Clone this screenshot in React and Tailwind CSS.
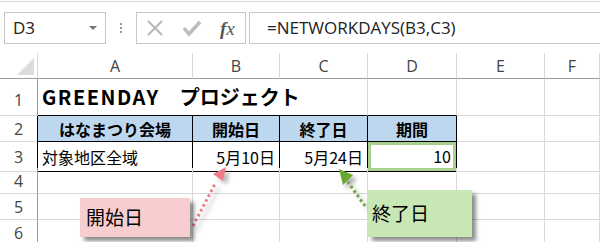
import React from 'react';

const cols = ['A', 'B', 'C', 'D', 'E', 'F'];
const grid = 'grid grid-cols-[38px_155px_87px_88px_89px_88px_1fr]';
const jp = "font-['Noto_Sans_CJK_JP',sans-serif]";

function Cell({ children, className = '' }) {
  return <div className={`border-r border-b border-[#d9d9d9] flex items-center text-[16px] text-black ${jp} ${className}`}>{children}</div>;
}

function RowHead({ n, h = '' }) {
  return (
    <div className={`${h} border-r border-b border-[#d9d9d9] border-r-[#9b9b9b] flex items-center justify-center text-[16px] text-[#444] font-['Open_Sans',sans-serif]`}>
      {n}
    </div>
  );
}

function FormulaBar() {
  return (
    <div className="h-[52px] border-t border-[#d5d5d5] mt-px flex items-start pt-[10px] pl-1">
      <div className="w-[102px] h-[32px] border border-[#c6c6c6] flex items-center justify-between pl-2 pr-2">
        <span className="text-[17px] text-[#222] font-['Open_Sans',sans-serif]">D3</span>
        <span className="w-0 h-0 border-l-[4px] border-r-[4px] border-t-[4px] border-l-transparent border-r-transparent border-t-[#777]" />
      </div>
      <div className="w-[30px] h-[32px] flex flex-col items-center justify-center gap-[2px]">
        <span className="w-[2px] h-[2px] bg-[#999]" />
        <span className="w-[2px] h-[2px] bg-[#999]" />
        <span className="w-[2px] h-[2px] bg-[#999]" />
      </div>
      <div className="w-[110px] h-[32px] border border-[#c6c6c6] flex items-center pl-[9px] gap-[18px]">
        <svg width="18" height="18" viewBox="0 0 18 18"><path d="M2 2L16 16M16 2L2 16" stroke="#b4b4b4" strokeWidth="1.8" /></svg>
        <svg width="20" height="18" viewBox="0 0 20 18"><path d="M2 9L7 15L18 3" stroke="#bcbcbc" strokeWidth="3.5" fill="none" /></svg>
        <span className="text-[19px] italic text-[#555] font-['Liberation_Serif',serif] leading-none"><span className="font-bold">f</span>x</span>
      </div>
      <div className="ml-[3px] flex-1 h-[32px] border border-[#c6c6c6] border-r-0 flex items-center pl-[17px] text-[17px] text-[#222] font-['Open_Sans',sans-serif]">
        =NETWORKDAYS(B3,C3)
      </div>
    </div>
  );
}

export default function App() {
  return (
    <div className="w-[600px] h-[242px] bg-white overflow-hidden relative">
      <FormulaBar />
      <div className={`${grid} h-[26px]`}>
        <div className="border-r border-b border-[#d9d9d9] border-b-[#9b9b9b] relative">
          <span className="absolute right-[3px] bottom-[3px] w-0 h-0" style={{ borderBottom: '17px solid #dcdcdc', borderLeft: '17px solid transparent' }} />
        </div>
        {cols.map((c) => (
          <div key={c} className="border-r border-b border-[#d9d9d9] border-b-[#9b9b9b] flex items-center justify-center text-[16px] text-[#444] font-['Open_Sans',sans-serif]">{c}</div>
        ))}
      </div>
      <div className={`${grid} h-[37px]`}>
        <RowHead n="1" h="pt-[6px]" />
        <Cell className="pl-1 border-b-black col-span-3 font-bold text-[20px] whitespace-nowrap overflow-visible">
          <span className="tracking-[1.5px]">GREENDAY</span>　プロジェクト
        </Cell>
        <Cell className="border-b-black" />
        <Cell />
        <Cell />
      </div>
      <div className={`${grid} h-[26px]`}>
        <RowHead n="2" />
        <Cell className="bg-[#bdd7ee] border-black border-l justify-center font-bold -ml-px">はなまつり会場</Cell>
        <Cell className="bg-[#bdd7ee] border-black justify-center font-bold">開始日</Cell>
        <Cell className="bg-[#bdd7ee] border-black justify-center font-bold">終了日</Cell>
        <Cell className="bg-[#bdd7ee] border-black justify-center font-bold">期間</Cell>
        <Cell />
        <Cell />
      </div>
      <div className={`${grid} h-[26px]`}>
        <RowHead n="3" />
        <Cell className="border-black border-l -ml-px pl-1">対象地区全域</Cell>
        <Cell className="border-black justify-end pr-1">5月10日</Cell>
        <Cell className="border-black justify-end pr-1">5月24日</Cell>
        <Cell className="border-black justify-end p-0">
          <div className="w-full h-full border-[3px] border-[#a9d08e] flex items-center justify-end pr-[2px] -mt-px">10</div>
        </Cell>
        <Cell />
        <Cell />
      </div>
      {['4', '5', '6'].map((n) => (
        <div key={n} className={`${grid} h-[26px]`}>
          <RowHead n={n} />
          <Cell /><Cell /><Cell /><Cell /><Cell /><Cell />
        </div>
      ))}

      <svg className="absolute left-0 top-0" width="600" height="242">
        <defs>
          <filter id="sh" x="-50%" y="-50%" width="200%" height="200%">
            <feGaussianBlur stdDeviation="2" />
          </filter>
        </defs>
        <g opacity="0.45" filter="url(#sh)" transform="translate(4,4)">
          <line x1="193" y1="226" x2="216" y2="182" stroke="#555" strokeWidth="3" strokeDasharray="2.5 3" />
          <polygon points="213,174 225,167 223,180" fill="#555" />
          <line x1="365" y1="206" x2="348" y2="182" stroke="#555" strokeWidth="3" strokeDasharray="2.5 3" />
          <polygon points="339,169 353,175 343,185" fill="#555" />
        </g>
        <line x1="193" y1="226" x2="216" y2="182" stroke="#ee7b85" strokeWidth="3" strokeDasharray="2.5 3" />
        <polygon points="213,174 226,167 223,181" fill="#ee7b85" />
        <line x1="365" y1="206" x2="348" y2="182" stroke="#69a832" strokeWidth="3" strokeDasharray="2.5 3" />
        <polygon points="339,169 353,175 343,185" fill="#69a832" />
      </svg>

      <div className={`absolute left-[80px] top-[198px] w-[110px] h-[39px] bg-[#f8cdd0] shadow-[4px_4px_4px_rgba(0,0,0,0.45)] flex items-center pl-[6px] text-[19px] text-black ${jp}`}>
        開始日
      </div>
      <div className={`absolute left-[368px] top-[190px] w-[104px] h-[47px] bg-[#c9e7b4] shadow-[4px_4px_4px_rgba(0,0,0,0.45)] flex items-center pl-[4px] text-[19px] text-black ${jp}`}>
        終了日
      </div>
    </div>
  );
}
